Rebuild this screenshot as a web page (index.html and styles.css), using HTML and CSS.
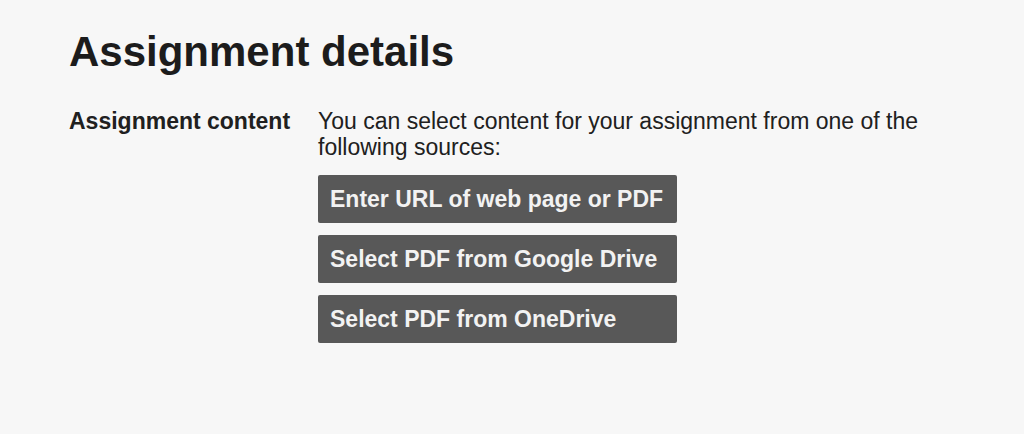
FILE: index.html
```html
<!DOCTYPE html>
<html lang="en">
<head>
<meta charset="utf-8">
<title>Assignment details</title>
<link rel="stylesheet" href="styles.css">
</head>
<body>
<main class="page">
  <h1 class="title">Assignment details</h1>
  <div class="field">
    <div class="field-label">Assignment content</div>
    <div class="field-body">
      <p class="intro">You can select content for your assignment from one of the following sources:</p>
      <div class="sources">
        <button class="source-btn" type="button">Enter URL of web page or PDF</button>
        <button class="source-btn" type="button">Select PDF from Google Drive</button>
        <button class="source-btn" type="button">Select PDF from OneDrive</button>
      </div>
    </div>
  </div>
</main>
</body>
</html>
```
FILE: styles.css
```css
html, body {
  margin: 0;
  padding: 0;
  background: #f7f7f7;
}
body {
  font-family: "Liberation Sans", Arial, Helvetica, sans-serif;
  color: #202020;
}
.page {
  padding: 28px 69px 0 69px;
}
.title {
  margin: 0;
  font-size: 42px;
  line-height: 48px;
  font-weight: bold;
  color: #1c1c1c;
}
.field {
  display: flex;
  margin-top: 32px;
}
.field-label {
  width: 249px;
  flex: none;
  font-size: 23px;
  line-height: 26px;
  font-weight: bold;
  white-space: nowrap;
}
.field-body {
  width: 640px;
}
.intro {
  margin: 0;
  font-size: 23px;
  line-height: 26px;
}
.sources {
  display: flex;
  flex-direction: column;
  gap: 12px;
  margin-top: 15px;
  width: 359px;
}
.source-btn {
  height: 48px;
  border: none;
  border-radius: 2px;
  background: #585858;
  color: #f2f2f2;
  font-family: inherit;
  font-size: 23px;
  font-weight: bold;
  text-align: left;
  padding: 0 12px;
}
```
